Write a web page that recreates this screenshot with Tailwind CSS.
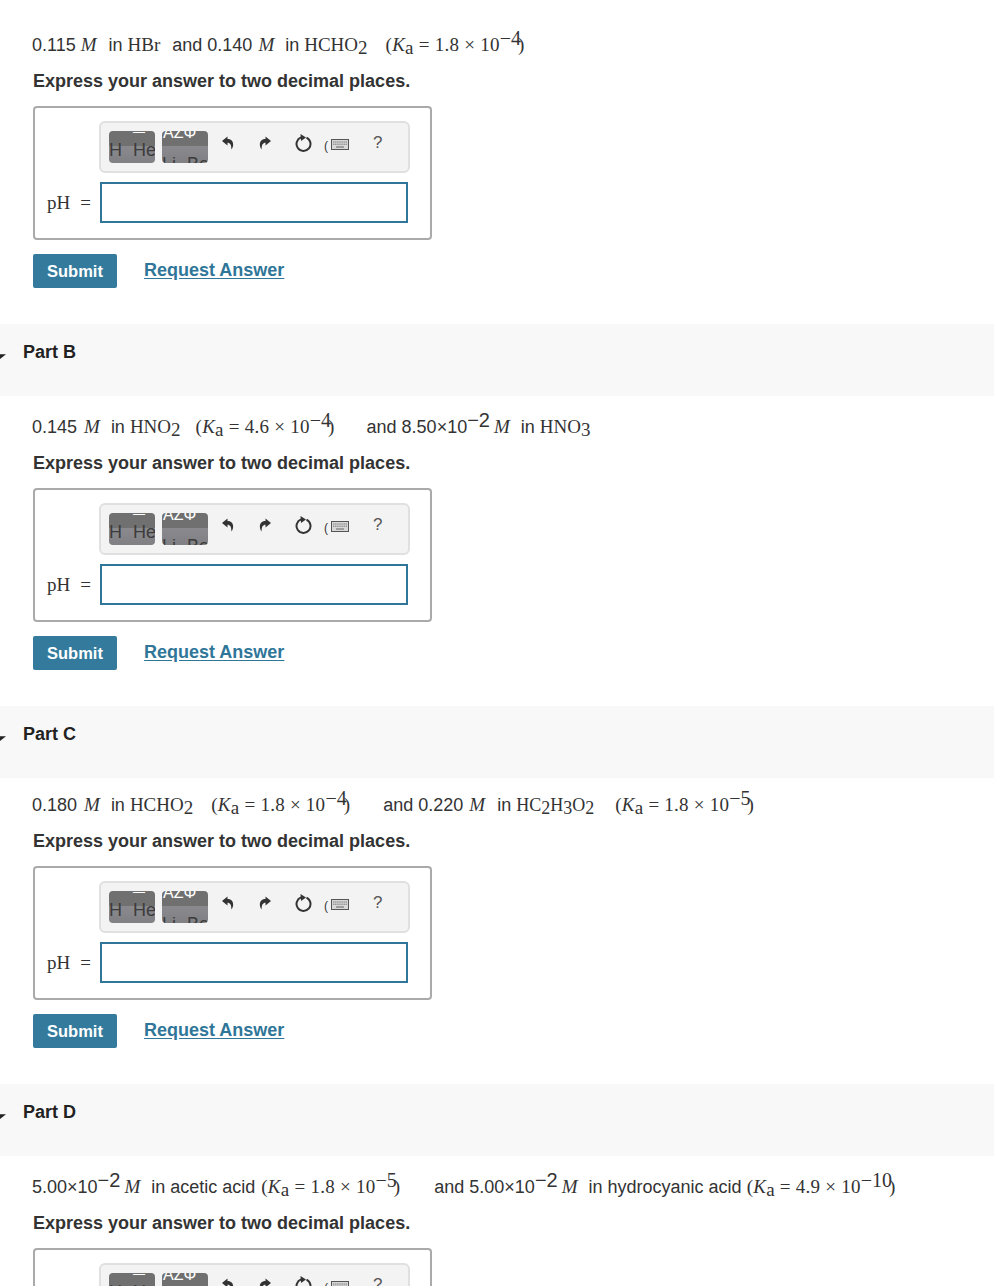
<!DOCTYPE html>
<html lang="en">
<head>
    <meta charset="UTF-8">
    <title>Part A</title>
    <script src="https://cdn.jsdelivr.net/npm/@tailwindcss/browser@4"></script>
</head>
<body class="bg-white h-[1286px] overflow-hidden font-['Liberation_Sans',sans-serif] text-[#333] text-[18px]">
    <svg width="0" height="0" class="absolute">
        <symbol id="undo" viewBox="0 0 12 14"><path d="M5.5 0.5 L0 5 L5.5 9.5 V6.8 C8.2 6.8 9.4 8.8 9.4 13.5 C12 10.4 12.4 3 5.5 3 Z" fill="#333"/></symbol>
        <symbol id="redo" viewBox="0 0 12 14"><path d="M6.5 0.5 L12 5 L6.5 9.5 V6.8 C3.8 6.8 2.6 8.8 2.6 13.5 C0 10.4 -0.4 3 6.5 3 Z" fill="#333"/></symbol>
        <symbol id="reset" viewBox="0 0 18 20"><path d="M11.5 4.6 A7 7 0 1 1 6 4.4" fill="none" stroke="#333" stroke-width="2"/><path d="M5.5 1 L11 4.4 L6 8 Z" fill="#333"/></symbol>
        <symbol id="keyboard" viewBox="0 0 18 11"><rect x="0.5" y="0.5" width="17" height="10" fill="#d8d8d8" stroke="#555"/><path d="M2 3H16M2 5.2H16" stroke="#777" stroke-width="1" stroke-dasharray="1.4 0.7"/><path d="M5 8H13" stroke="#777" stroke-width="1.2"/></symbol>
        <symbol id="caret" viewBox="0 0 6 6"><path d="M0 1.2 H6 L0 6 Z" fill="#222"/></symbol>
    </svg>

    <!-- Part A -->
    <section class="pt-[27px] pb-[36px] pl-[33px]">
        <p class="h-[36px] leading-[36px] whitespace-nowrap -ml-px">0.115<i class="font-['Liberation_Serif',serif] ml-[5px] text-[19px]">M</i><span class="ml-[12px]">in</span><span class="font-['Liberation_Serif',serif] ml-[5px] text-[19px]">HBr</span><span class="ml-[12px]">and 0.140</span><i class="font-['Liberation_Serif',serif] ml-[6px] text-[19px]">M</i><span class="ml-[11px]">in</span><span class="font-['Liberation_Serif',serif] ml-[5px] text-[19px]">HCHO<span class="align-[-3px]">2</span></span><span class="font-['Liberation_Serif',serif] ml-[18px] text-[19px] tracking-[0.25px]">(<i>K</i><span class="align-[-3px]">a</span> = 1.8 × 10<span class="align-[6px] text-[20px] leading-[0] tracking-normal">−4</span><span class="-ml-[3px]">)</span></span></p>
        <p class="h-[36px] leading-[36px] font-bold">Express your answer to two decimal places.</p>
        <div class="mt-[7px] w-[399px] h-[134px] border-2 border-[#aaa] rounded-[4px] bg-white">
            <div class="ml-[64px] mt-[13px] w-[311px] h-[52px] border-2 border-[#e0e0e0] rounded-[6px] bg-[#f3f3f3] flex pl-[8px] pt-[8px]">
                <div class="w-[46px] h-[32px] rounded-[4px] overflow-hidden flex flex-col text-[#3c3c3c] text-[18px] bg-[linear-gradient(#707070_0,#707070_48%,#8a8a8e_48%,#808084_100%)]"><span class="h-[11px] shrink-0 leading-[3px] text-white pl-[24px] text-[12px]">—</span><span class="leading-[16px] shrink-0 whitespace-nowrap">H<span class="ml-[11px]">He</span></span></div>
                <div class="ml-[7px] w-[46px] h-[32px] rounded-[4px] overflow-hidden flex flex-col text-[#3c3c3c] text-[18px] bg-[linear-gradient(#707070_0,#707070_48%,#8a8a8e_48%,#808084_100%)]"><span class="-mt-[7px] h-[32px] shrink-0 leading-[18px] text-white text-[16px] pl-[1px] whitespace-nowrap">ΑΖΦ</span><span class="leading-[16px] shrink-0 whitespace-nowrap">Li<span class="ml-[11px]">Be</span></span></div>
                <svg class="ml-[14px] mt-[5px] w-[12px] h-[14px]"><use href="#undo"/></svg>
                <svg class="ml-[25px] mt-[5px] w-[12px] h-[14px]"><use href="#redo"/></svg>
                <svg class="ml-[24px] mt-[2px] w-[18px] h-[20px]"><use href="#reset"/></svg>
                <span class="ml-[11px] mt-[8px] text-[12px] leading-[14px] text-[#333]">(</span>
                <svg class="ml-[3px] mt-[8px] w-[18px] h-[11px]"><use href="#keyboard"/></svg>
                <span class="ml-[24px] mt-[3px] text-[17px] leading-[18px] text-[#555]">?</span>
            </div>
            <div class="flex mt-[9px] items-center h-[41px]">
                <span class="ml-[12px] pt-[2px] w-[53px] font-['Liberation_Serif',serif] text-[19px]">pH<span class="ml-[10px]">=</span></span>
                <input type="text" class="w-[308px] h-[41px] border-2 border-[#2f7699] bg-white">
            </div>
        </div>
        <div class="flex items-start mt-[14px]">
            <button class="w-[84px] h-[34px] bg-[#337a9c] text-white rounded-[2px] font-bold text-[16.5px]">Submit</button>
            <a href="#" class="ml-[27px] font-bold text-[#2f7699] underline underline-offset-2 leading-[33px]">Request Answer</a>
        </div>
    </section>

    <!-- Part B -->
    <div class="h-[72px] bg-[#f8f8f8] flex items-start"><svg class="w-[6px] h-[6px] mt-[29px]"><use href="#caret"/></svg><h2 class="ml-[17px] mt-[18px] font-bold leading-[20px] text-[#222]">Part B</h2></div>
    <section class="pt-[13px] pb-[36px] pl-[33px]">
        <p class="h-[36px] leading-[36px] whitespace-nowrap -ml-px">0.145<i class="font-['Liberation_Serif',serif] ml-[7px] text-[19px]">M</i><span class="ml-[11px]">in</span><span class="font-['Liberation_Serif',serif] ml-[5px] text-[19px]">HNO<span class="align-[-3px]">2</span></span><span class="font-['Liberation_Serif',serif] ml-[15px] text-[19px] tracking-[0.25px]">(<i>K</i><span class="align-[-3px]">a</span> = 4.6 × 10<span class="align-[6px] text-[20px] leading-[0] tracking-normal">−4</span><span class="-ml-[3px]">)</span></span><span class="ml-[32px]">and 8.50×10<span class="align-[6px] text-[20px] leading-[0]">−2</span></span><i class="font-['Liberation_Serif',serif] ml-[4px] text-[19px]">M</i><span class="ml-[11px]">in</span><span class="font-['Liberation_Serif',serif] ml-[5px] text-[19px]">HNO<span class="align-[-3px]">3</span></span></p>
        <p class="h-[36px] leading-[36px] font-bold">Express your answer to two decimal places.</p>
        <div class="mt-[7px] w-[399px] h-[134px] border-2 border-[#aaa] rounded-[4px] bg-white">
            <div class="ml-[64px] mt-[13px] w-[311px] h-[52px] border-2 border-[#e0e0e0] rounded-[6px] bg-[#f3f3f3] flex pl-[8px] pt-[8px]">
                <div class="w-[46px] h-[32px] rounded-[4px] overflow-hidden flex flex-col text-[#3c3c3c] text-[18px] bg-[linear-gradient(#707070_0,#707070_48%,#8a8a8e_48%,#808084_100%)]"><span class="h-[11px] shrink-0 leading-[3px] text-white pl-[24px] text-[12px]">—</span><span class="leading-[16px] shrink-0 whitespace-nowrap">H<span class="ml-[11px]">He</span></span></div>
                <div class="ml-[7px] w-[46px] h-[32px] rounded-[4px] overflow-hidden flex flex-col text-[#3c3c3c] text-[18px] bg-[linear-gradient(#707070_0,#707070_48%,#8a8a8e_48%,#808084_100%)]"><span class="-mt-[7px] h-[32px] shrink-0 leading-[18px] text-white text-[16px] pl-[1px] whitespace-nowrap">ΑΖΦ</span><span class="leading-[16px] shrink-0 whitespace-nowrap">Li<span class="ml-[11px]">Be</span></span></div>
                <svg class="ml-[14px] mt-[5px] w-[12px] h-[14px]"><use href="#undo"/></svg>
                <svg class="ml-[25px] mt-[5px] w-[12px] h-[14px]"><use href="#redo"/></svg>
                <svg class="ml-[24px] mt-[2px] w-[18px] h-[20px]"><use href="#reset"/></svg>
                <span class="ml-[11px] mt-[8px] text-[12px] leading-[14px] text-[#333]">(</span>
                <svg class="ml-[3px] mt-[8px] w-[18px] h-[11px]"><use href="#keyboard"/></svg>
                <span class="ml-[24px] mt-[3px] text-[17px] leading-[18px] text-[#555]">?</span>
            </div>
            <div class="flex mt-[9px] items-center h-[41px]">
                <span class="ml-[12px] pt-[2px] w-[53px] font-['Liberation_Serif',serif] text-[19px]">pH<span class="ml-[10px]">=</span></span>
                <input type="text" class="w-[308px] h-[41px] border-2 border-[#2f7699] bg-white">
            </div>
        </div>
        <div class="flex items-start mt-[14px]">
            <button class="w-[84px] h-[34px] bg-[#337a9c] text-white rounded-[2px] font-bold text-[16.5px]">Submit</button>
            <a href="#" class="ml-[27px] font-bold text-[#2f7699] underline underline-offset-2 leading-[33px]">Request Answer</a>
        </div>
    </section>

    <!-- Part C -->
    <div class="h-[72px] bg-[#f8f8f8] flex items-start"><svg class="w-[6px] h-[6px] mt-[29px]"><use href="#caret"/></svg><h2 class="ml-[17px] mt-[18px] font-bold leading-[20px] text-[#222]">Part C</h2></div>
    <section class="pt-[9px] pb-[36px] pl-[33px]">
        <p class="h-[36px] leading-[36px] whitespace-nowrap -ml-px">0.180<i class="font-['Liberation_Serif',serif] ml-[7px] text-[19px]">M</i><span class="ml-[11px]">in</span><span class="font-['Liberation_Serif',serif] ml-[5px] text-[19px]">HCHO<span class="align-[-3px]">2</span></span><span class="font-['Liberation_Serif',serif] ml-[18px] text-[19px] tracking-[0.25px]">(<i>K</i><span class="align-[-3px]">a</span> = 1.8 × 10<span class="align-[6px] text-[20px] leading-[0] tracking-normal">−4</span><span class="-ml-[3px]">)</span></span><span class="ml-[33px]">and 0.220</span><i class="font-['Liberation_Serif',serif] ml-[6px] text-[19px]">M</i><span class="ml-[12px]">in</span><span class="font-['Liberation_Serif',serif] ml-[5px] text-[18px]">HC<span class="align-[-3px]">2</span>H<span class="align-[-3px]">3</span>O<span class="align-[-3px]">2</span></span><span class="font-['Liberation_Serif',serif] ml-[21px] text-[19px] tracking-[0.25px]">(<i>K</i><span class="align-[-3px]">a</span> = 1.8 × 10<span class="align-[6px] text-[20px] leading-[0] tracking-normal">−5</span><span class="-ml-[3px]">)</span></span></p>
        <p class="h-[36px] leading-[36px] font-bold">Express your answer to two decimal places.</p>
        <div class="mt-[7px] w-[399px] h-[134px] border-2 border-[#aaa] rounded-[4px] bg-white">
            <div class="ml-[64px] mt-[13px] w-[311px] h-[52px] border-2 border-[#e0e0e0] rounded-[6px] bg-[#f3f3f3] flex pl-[8px] pt-[8px]">
                <div class="w-[46px] h-[32px] rounded-[4px] overflow-hidden flex flex-col text-[#3c3c3c] text-[18px] bg-[linear-gradient(#707070_0,#707070_48%,#8a8a8e_48%,#808084_100%)]"><span class="h-[11px] shrink-0 leading-[3px] text-white pl-[24px] text-[12px]">—</span><span class="leading-[16px] shrink-0 whitespace-nowrap">H<span class="ml-[11px]">He</span></span></div>
                <div class="ml-[7px] w-[46px] h-[32px] rounded-[4px] overflow-hidden flex flex-col text-[#3c3c3c] text-[18px] bg-[linear-gradient(#707070_0,#707070_48%,#8a8a8e_48%,#808084_100%)]"><span class="-mt-[7px] h-[32px] shrink-0 leading-[18px] text-white text-[16px] pl-[1px] whitespace-nowrap">ΑΖΦ</span><span class="leading-[16px] shrink-0 whitespace-nowrap">Li<span class="ml-[11px]">Be</span></span></div>
                <svg class="ml-[14px] mt-[5px] w-[12px] h-[14px]"><use href="#undo"/></svg>
                <svg class="ml-[25px] mt-[5px] w-[12px] h-[14px]"><use href="#redo"/></svg>
                <svg class="ml-[24px] mt-[2px] w-[18px] h-[20px]"><use href="#reset"/></svg>
                <span class="ml-[11px] mt-[8px] text-[12px] leading-[14px] text-[#333]">(</span>
                <svg class="ml-[3px] mt-[8px] w-[18px] h-[11px]"><use href="#keyboard"/></svg>
                <span class="ml-[24px] mt-[3px] text-[17px] leading-[18px] text-[#555]">?</span>
            </div>
            <div class="flex mt-[9px] items-center h-[41px]">
                <span class="ml-[12px] pt-[2px] w-[53px] font-['Liberation_Serif',serif] text-[19px]">pH<span class="ml-[10px]">=</span></span>
                <input type="text" class="w-[308px] h-[41px] border-2 border-[#2f7699] bg-white">
            </div>
        </div>
        <div class="flex items-start mt-[14px]">
            <button class="w-[84px] h-[34px] bg-[#337a9c] text-white rounded-[2px] font-bold text-[16.5px]">Submit</button>
            <a href="#" class="ml-[27px] font-bold text-[#2f7699] underline underline-offset-2 leading-[33px]">Request Answer</a>
        </div>
    </section>

    <!-- Part D -->
    <div class="h-[72px] bg-[#f8f8f8] flex items-start"><svg class="w-[6px] h-[6px] mt-[29px]"><use href="#caret"/></svg><h2 class="ml-[17px] mt-[18px] font-bold leading-[20px] text-[#222]">Part D</h2></div>
    <section class="pt-[13px] pl-[33px]">
        <p class="h-[36px] leading-[36px] whitespace-nowrap -ml-px">5.00×10<span class="align-[6px] text-[20px] leading-[0]">−2</span><i class="font-['Liberation_Serif',serif] ml-[4px] text-[19px]">M</i><span class="ml-[11px]">in acetic acid</span><span class="font-['Liberation_Serif',serif] ml-[6px] text-[19px] tracking-[0.25px]">(<i>K</i><span class="align-[-3px]">a</span> = 1.8 × 10<span class="align-[6px] text-[20px] leading-[0] tracking-normal">−5</span><span class="-ml-[3px]">)</span></span><span class="ml-[34px]">and 5.00×10<span class="align-[6px] text-[20px] leading-[0]">−2</span></span><i class="font-['Liberation_Serif',serif] ml-[4px] text-[19px]">M</i><span class="ml-[11px]">in hydrocyanic acid</span><span class="font-['Liberation_Serif',serif] ml-[5px] text-[19px] tracking-[0.25px]">(<i>K</i><span class="align-[-3px]">a</span> = 4.9 × 10<span class="align-[6px] text-[20px] leading-[0] tracking-normal">−10</span><span class="-ml-[3px]">)</span></span></p>
        <p class="h-[36px] leading-[36px] font-bold">Express your answer to two decimal places.</p>
        <div class="mt-[7px] w-[399px] h-[134px] border-2 border-[#aaa] rounded-[4px] bg-white">
            <div class="ml-[64px] mt-[13px] w-[311px] h-[52px] border-2 border-[#e0e0e0] rounded-[6px] bg-[#f3f3f3] flex pl-[8px] pt-[8px]">
                <div class="w-[46px] h-[32px] rounded-[4px] overflow-hidden flex flex-col text-[#3c3c3c] text-[18px] bg-[linear-gradient(#707070_0,#707070_48%,#8a8a8e_48%,#808084_100%)]"><span class="h-[11px] shrink-0 leading-[3px] text-white pl-[24px] text-[12px]">—</span><span class="leading-[16px] shrink-0 whitespace-nowrap">H<span class="ml-[11px]">He</span></span></div>
                <div class="ml-[7px] w-[46px] h-[32px] rounded-[4px] overflow-hidden flex flex-col text-[#3c3c3c] text-[18px] bg-[linear-gradient(#707070_0,#707070_48%,#8a8a8e_48%,#808084_100%)]"><span class="-mt-[7px] h-[32px] shrink-0 leading-[18px] text-white text-[16px] pl-[1px] whitespace-nowrap">ΑΖΦ</span><span class="leading-[16px] shrink-0 whitespace-nowrap">Li<span class="ml-[11px]">Be</span></span></div>
                <svg class="ml-[14px] mt-[5px] w-[12px] h-[14px]"><use href="#undo"/></svg>
                <svg class="ml-[25px] mt-[5px] w-[12px] h-[14px]"><use href="#redo"/></svg>
                <svg class="ml-[24px] mt-[2px] w-[18px] h-[20px]"><use href="#reset"/></svg>
                <span class="ml-[11px] mt-[8px] text-[12px] leading-[14px] text-[#333]">(</span>
                <svg class="ml-[3px] mt-[8px] w-[18px] h-[11px]"><use href="#keyboard"/></svg>
                <span class="ml-[24px] mt-[3px] text-[17px] leading-[18px] text-[#555]">?</span>
            </div>
        </div>
    </section>
</body>
</html>
